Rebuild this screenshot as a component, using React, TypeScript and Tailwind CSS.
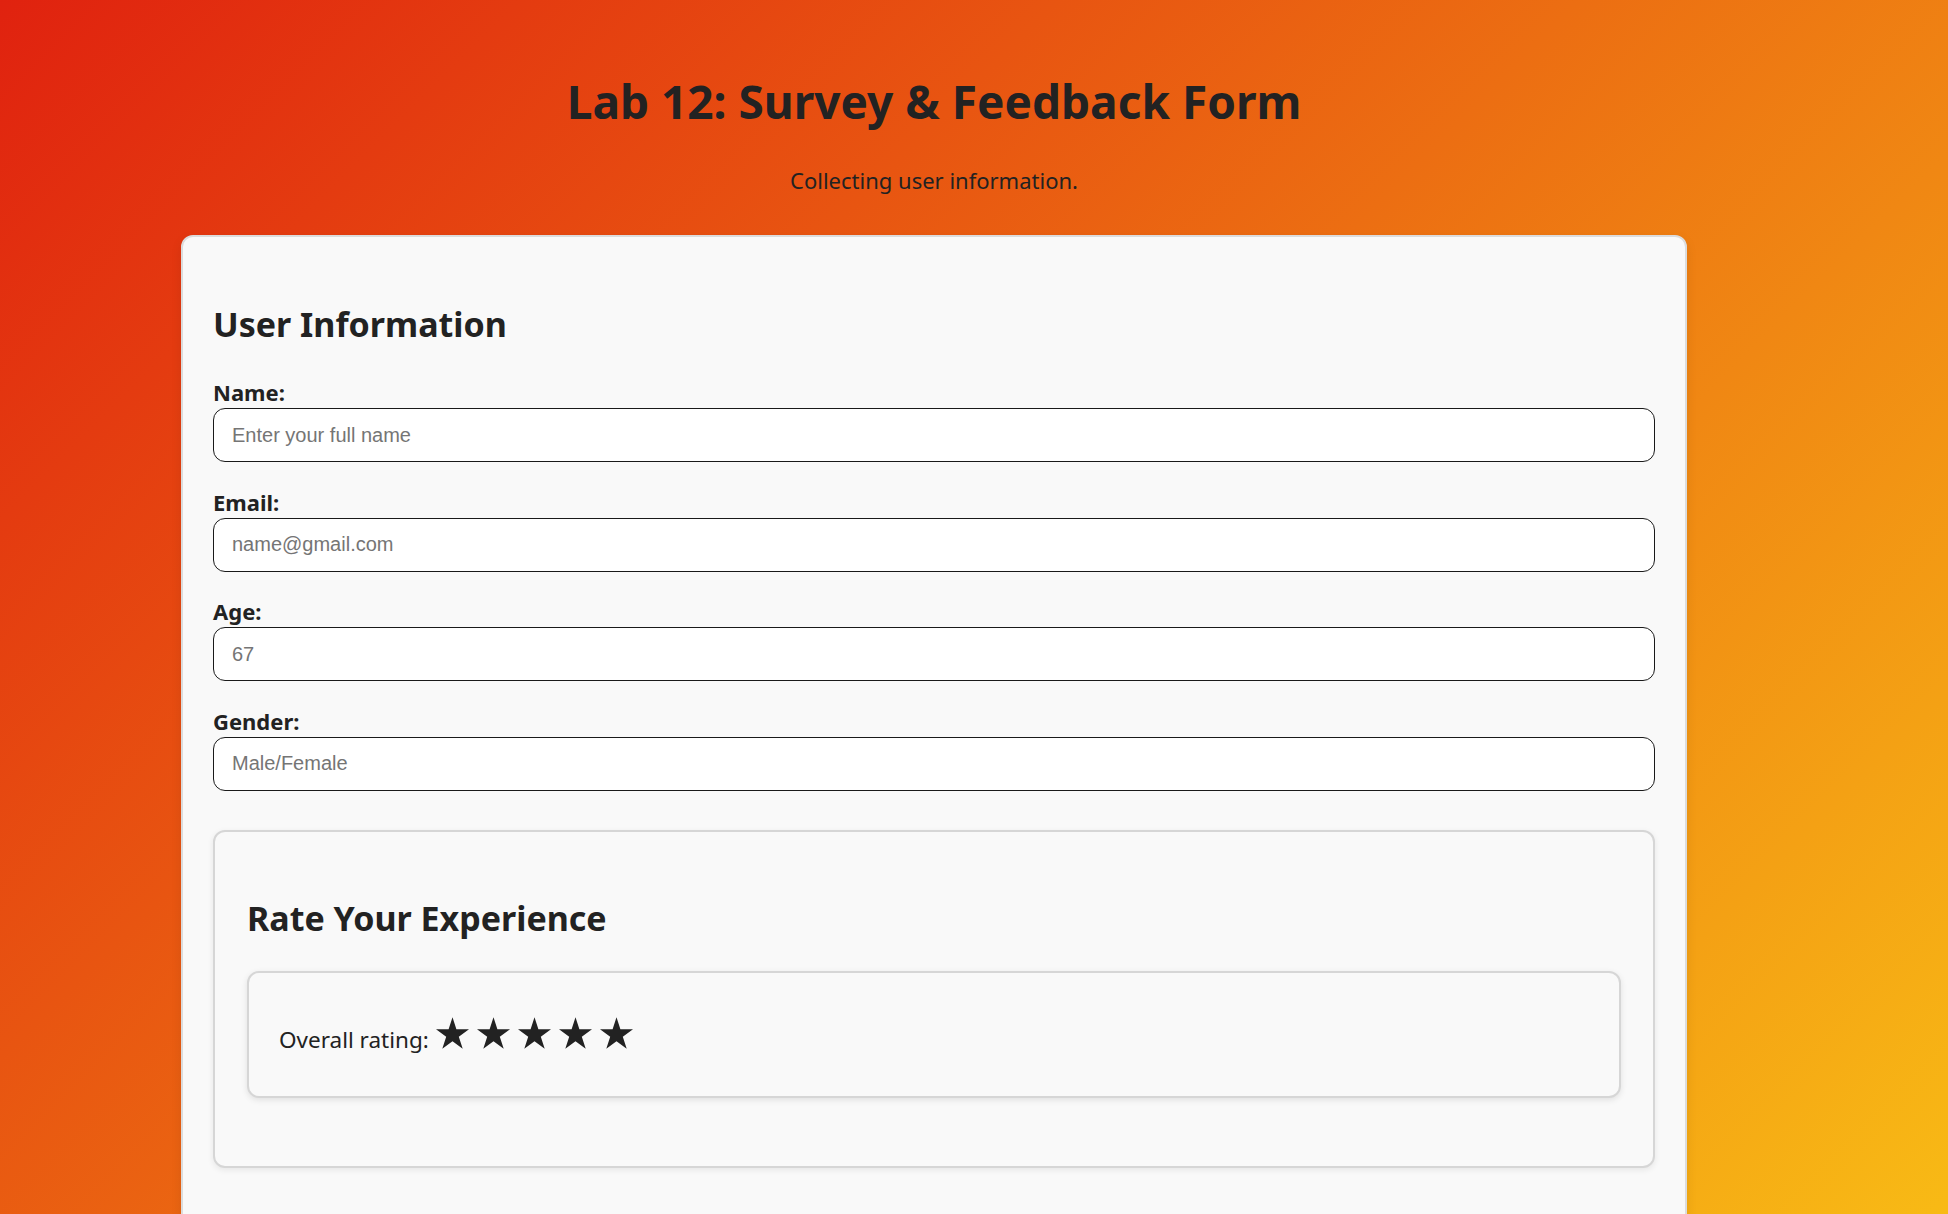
const fields = [
  { label: 'Name:', type: 'text', placeholder: 'Enter your full name' },
  { label: 'Email:', type: 'email', placeholder: 'name@gmail.com' },
  { label: 'Age:', type: 'number', placeholder: '67' },
  { label: 'Gender:', type: 'text', placeholder: 'Male/Female' },
];

const Star = () => (
  <svg viewBox="0 0 95.1 90.45" className="h-[32px] w-[33px] shrink-0" fill="#222">
    <polygon points="47.55,0 58.78,34.55 95.1,34.55 65.71,55.9 76.94,90.45 47.55,69.1 18.16,90.45 29.39,55.9 0,34.55 36.32,34.55" />
  </svg>
);

const App = () => {
  return (
    <div className="h-screen overflow-hidden bg-[linear-gradient(135deg,#e0220f,#f8ba15)] font-['Noto_Sans',sans-serif] text-[#222]">
      <div className="ml-[181px] w-[1506px] pt-[73px]">
        <h1 className="text-center text-[46px] font-bold leading-[56px]">Lab 12: Survey &amp; Feedback Form</h1>
        <p className="mt-[37px] text-center text-[22px] leading-[28px]">Collecting user information.</p>

        {/* Form card */}
        <div className="mt-[41px] rounded-[12px] border-2 border-[#dcdcdc] bg-[#f9f9f9] px-[30px] pt-[30px] pb-[80px] shadow-[0_4px_12px_rgba(0,0,0,0.08)]">
          <h2 className="mt-[35px] text-[34px] font-bold leading-[44px]">User Information</h2>

          <div className="mt-[32px] flex flex-col gap-y-[25.5px]">
            {fields.map((f) => (
              <div key={f.label} className="flex flex-col">
                <label className="text-[22px] font-bold leading-[28px]">{f.label}</label>
                <input
                  type={f.type}
                  placeholder={f.placeholder}
                  className="mt-[2px] h-[54px] w-full rounded-[12px] border border-[#1a1a1a] bg-white px-[18px] font-['Liberation_Sans',Arial,sans-serif] text-[20px] text-[#222] outline-none placeholder:text-[#757575]"
                />
              </div>
            ))}
          </div>

          {/* Rating section */}
          <div className="mt-[39px] rounded-[12px] border-2 border-[#d6d6d6] bg-[#f9f9f9] px-[32px] pt-[32px] pb-[68px] shadow-[0_2px_6px_rgba(0,0,0,0.08)]">
            <h2 className="mt-[32px] text-[34px] font-bold leading-[44px]">Rate Your Experience</h2>
            <div className="mt-[31px] rounded-[12px] border-2 border-[#d6d6d6] bg-[#f9f9f9] px-[30px] pt-[44px] pb-[42px] shadow-[0_2px_6px_rgba(0,0,0,0.1)]">
              <div className="flex items-end">
                <span className="text-[22.5px] leading-[28px]">Overall rating:</span>
                <div className="mb-[5px] ml-[7px] flex gap-[8px]">
                  <Star />
                  <Star />
                  <Star />
                  <Star />
                  <Star />
                </div>
              </div>
            </div>
          </div>
        </div>
      </div>
    </div>
  );
};

export default App;
